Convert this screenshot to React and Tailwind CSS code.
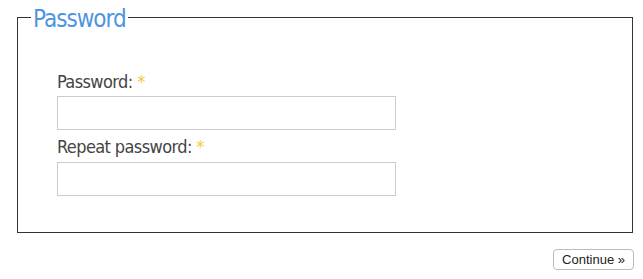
export default function App() {
    const font = { fontFamily: '"DejaVu Sans Condensed", "DejaVu Sans", sans-serif' };

    return (
        <div className="w-[643px] h-[279px] bg-white" style={font}>
            <fieldset className="ml-[17px] w-[616px] border border-[#333] px-[39px] pb-[36px] m-0">
                <legend className="ml-[-26px] px-[2px] pt-[4px] text-[24px] leading-[30px] tracking-[-1px] text-[#4f94e0] font-light">
                    Password
                </legend>
                <div className="pt-[36px]">
                    <label className="block text-[18px] leading-[24px] tracking-[-0.6px] text-[#444] mb-[2px]">
                        Password: <span className="text-[#f5c842]">*</span>
                    </label>
                    <input type="password" className="block w-[339px] h-[34px] border border-[#ccc] bg-white outline-none" />
                    <label className="block text-[18px] leading-[24px] tracking-[-0.6px] text-[#444] mt-[5px] mb-[3px]">
                        Repeat password: <span className="text-[#f5c842]">*</span>
                    </label>
                    <input type="password" className="block w-[339px] h-[34px] border border-[#ccc] bg-white outline-none" />
                </div>
            </fieldset>
            <div className="flex justify-end pr-[9px] mt-[16px]">
                <button
                    type="button"
                    className="h-[21px] px-[8px] border border-[#bbb] rounded-[4px] bg-white text-[13px] leading-[19px] text-[#222]"
                    style={{ fontFamily: '"Liberation Sans", Arial, sans-serif' }}
                >
                    Continue »
                </button>
            </div>
        </div>
    );
}
